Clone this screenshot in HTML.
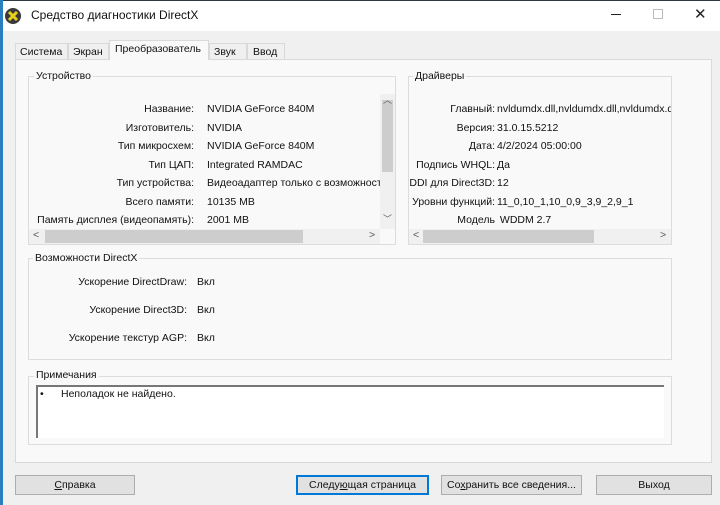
<!DOCTYPE html>
<html><head><meta charset="utf-8"><style>
*{margin:0;padding:0;box-sizing:border-box}
body{width:720px;height:505px;background:#f0f0f0;font-family:"Liberation Sans","DejaVu Sans",sans-serif;font-size:10.5px;color:#111;position:relative;overflow:hidden}
.a{position:absolute;white-space:nowrap}
.r{position:absolute;text-align:right;white-space:nowrap}
.g{position:absolute;border:1px solid #dcdcdc}
.lbl{position:absolute;background:#f9f9f9;padding:0 2px}
.btn{position:absolute;height:20px;border:1px solid #adadad;background:#e1e1e1;text-align:center;line-height:18px}
</style></head><body>
<div class="a" style="left:0;top:0;width:720px;height:31px;background:#fff;border-top:1px solid #2b3a44"></div>
<div class="a" style="left:0;top:0;width:3px;height:505px;background:#2a7fc0"></div>
<svg class="a" style="left:4px;top:7px" width="18" height="18" viewBox="0 0 18 18"><circle cx="9" cy="9" r="8" fill="#3a3a3a"/><path d="M5 5L13 13M13 5L5 13" stroke="#e8d21a" stroke-width="3"/></svg>
<div class="a" style="left:31px;top:8px;font-size:12px">Средство диагностики DirectX</div>
<div class="a" style="left:611px;top:14px;width:10px;height:1px;background:#222"></div>
<div class="a" style="left:653px;top:9px;width:10px;height:10px;border:1px solid #bbb"></div>
<div class="a" style="left:694px;top:5px;font-size:15px;color:#222">✕</div>
<div class="a" style="left:15px;top:59px;width:697px;height:404px;background:#f9f9f9;border:1px solid #d9d9d9"></div>
<div class="a" style="left:15px;top:43px;width:53px;height:17px;border:1px solid #d9d9d9;background:#f0f0f0;padding:2px 4px">Система</div>
<div class="a" style="left:68px;top:43px;width:41px;height:17px;border:1px solid #d9d9d9;background:#f0f0f0;padding:2px 4px">Экран</div>
<div class="a" style="left:109px;top:40px;width:100px;height:20px;border:1px solid #d9d9d9;border-bottom:none;background:#f9f9f9;padding:2px 5px">Преобразователь</div>
<div class="a" style="left:209px;top:43px;width:38px;height:17px;border:1px solid #d9d9d9;background:#f0f0f0;padding:2px 4px">Звук</div>
<div class="a" style="left:247px;top:43px;width:38px;height:17px;border:1px solid #d9d9d9;background:#f0f0f0;padding:2px 5px">Ввод</div>
<div class="g" style="left:28px;top:76px;width:368px;height:169px"></div>
<div class="lbl" style="left:34px;top:70px">Устройство</div>
<div class="r" style="left:30px;top:100px;width:164px;line-height:18.5px">Название:<br>Изготовитель:<br>Тип микросхем:<br>Тип ЦАП:<br>Тип устройства:<br>Всего памяти:<br>Память дисплея (видеопамять):</div>
<div class="a" style="left:207px;top:100px;width:173px;overflow:hidden;line-height:18.5px">NVIDIA GeForce 840M<br>NVIDIA<br>NVIDIA GeForce 840M<br>Integrated RAMDAC<br>Видеоадаптер только с возможност<br>10135 MB<br>2001 MB</div>
<div class="a" style="left:380px;top:94px;width:15px;height:135px;background:#f0f0f0"></div>
<div class="a" style="left:382px;top:100px;width:11px;height:72px;background:#cdcdcd"></div>
<div class="a" style="left:383px;top:93px;font-size:9px;color:#606060">︿</div>
<div class="a" style="left:383px;top:212px;font-size:9px;color:#606060">﹀</div>
<div class="a" style="left:29px;top:229px;width:351px;height:15px;background:#f0f0f0"></div>
<div class="a" style="left:45px;top:230px;width:258px;height:13px;background:#cdcdcd"></div>
<div class="a" style="left:33px;top:229px;color:#555">&lt;</div>
<div class="a" style="left:369px;top:229px;color:#555">&gt;</div>
<div class="g" style="left:408px;top:76px;width:264px;height:169px"></div>
<div class="lbl" style="left:413px;top:70px">Драйверы</div>
<div class="r" style="left:405px;top:100px;width:90px;line-height:18.5px">Главный:<br>Версия:<br>Дата:<br>Подпись WHQL:<br>DDI для Direct3D:<br>Уровни функций:<br>Модель</div>
<div class="a" style="left:497px;top:100px;width:174px;overflow:hidden;line-height:18.5px">nvldumdx.dll,nvldumdx.dll,nvldumdx.dll<br>31.0.15.5212<br>4/2/2024 05:00:00<br>Да<br>12<br>11_0,10_1,10_0,9_3,9_2,9_1<br>&nbsp;WDDM 2.7</div>
<div class="a" style="left:409px;top:229px;width:262px;height:15px;background:#f0f0f0"></div>
<div class="a" style="left:423px;top:230px;width:171px;height:13px;background:#cdcdcd"></div>
<div class="a" style="left:413px;top:229px;color:#555">&lt;</div>
<div class="a" style="left:660px;top:229px;color:#555">&gt;</div>
<div class="g" style="left:28px;top:258px;width:644px;height:102px"></div>
<div class="lbl" style="left:33px;top:252px">Возможности DirectX</div>
<div class="r" style="left:30px;top:268px;width:157px;line-height:28px">Ускорение DirectDraw:<br>Ускорение Direct3D:<br>Ускорение текстур AGP:</div>
<div class="a" style="left:197px;top:268px;line-height:28px">Вкл<br>Вкл<br>Вкл</div>
<div class="g" style="left:28px;top:376px;width:644px;height:69px"></div>
<div class="lbl" style="left:34px;top:369px">Примечания</div>
<div class="a" style="left:36px;top:385px;width:628px;height:53px;background:#fff;border-top:2px solid #777;border-left:2px solid #777"></div>
<div class="a" style="left:40px;top:388px">•</div>
<div class="a" style="left:61px;top:388px">Неполадок не найдено.</div>
<div class="btn" style="left:15px;top:475px;width:120px"><u>С</u>правка</div>
<div class="btn" style="left:296px;top:475px;width:133px;border:2px solid #0078d7;line-height:16px">Следу<u>ю</u>щая страница</div>
<div class="btn" style="left:441px;top:475px;width:141px">Со<u>х</u>ранить все сведения...</div>
<div class="btn" style="left:596px;top:475px;width:116px">Выход</div>
</body></html>
